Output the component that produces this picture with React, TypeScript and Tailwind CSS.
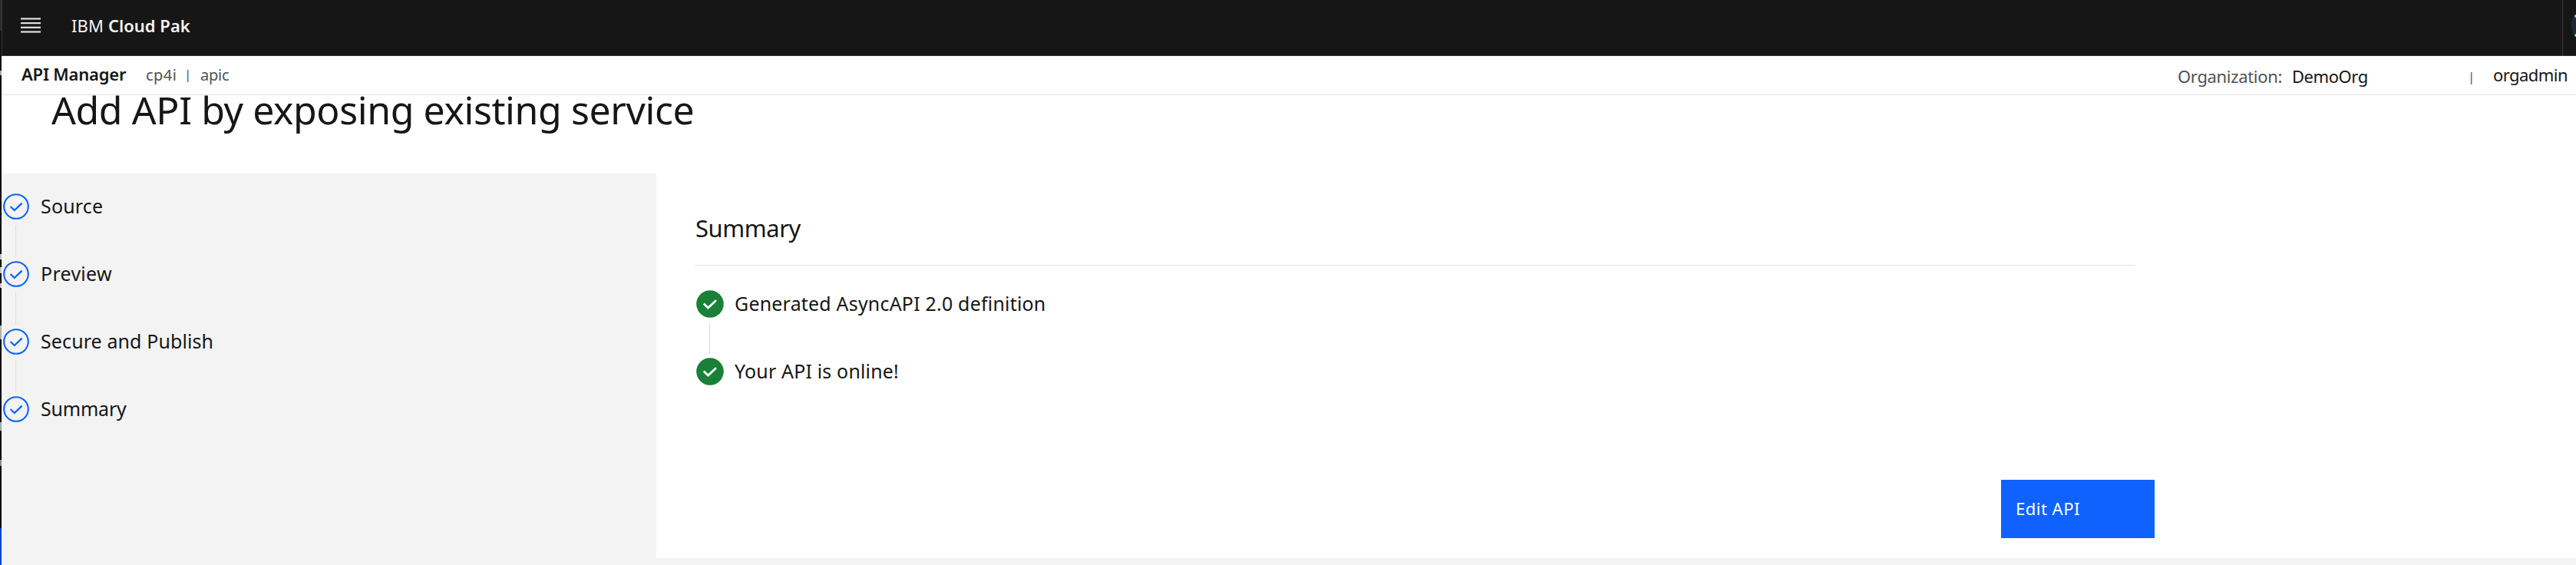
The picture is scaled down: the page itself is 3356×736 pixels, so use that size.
const steps = [
  { label: "Source", spacing: "tracking-[0.175px]" },
  { label: "Preview", spacing: "tracking-[0.28px]" },
  { label: "Secure and Publish", spacing: "tracking-[0.1px]" },
  { label: "Summary", spacing: "tracking-[-0.21px]" },
];

const results = [
  { label: "Generated AsyncAPI 2.0 definition", spacing: "tracking-[0.19px]" },
  { label: "Your API is online!", spacing: "tracking-[0.15px]" },
];

function StepIcon() {
  return (
    <svg width="34" height="34" viewBox="0 0 34 34" fill="none" stroke="#0f62fe" className="mt-px block shrink-0">
      <circle cx="17" cy="17" r="15.8" strokeWidth="2.1" />
      <path d="M9.6 17 L14.8 22 L24.6 12.6" strokeWidth="2.3" />
    </svg>
  );
}

function DoneIcon() {
  return (
    <svg width="36" height="36" viewBox="0 0 36 36" fill="none" className="block shrink-0">
      <circle cx="18" cy="18" r="17.8" fill="#198038" />
      <path d="M9.8 17.6 L15.5 23 L26 13.2" stroke="#fff" strokeWidth="2.8" />
    </svg>
  );
}

function EdgeStrip() {
  return (
    <div className="flex w-[2px] shrink-0 flex-col bg-black">
      <div className="h-[40px] bg-[#2c2c2c]" />
      <div className="h-[52px] bg-[#111111]" />
      <div className="h-[6px] bg-[#a8a8a8]" />
      <div className="mt-[233px] h-[7px] bg-[#c6c6c6]" />
      <div className="mt-[10px] h-[8px] bg-[#c6c6c6]" />
      <div className="mt-[13px] h-[6px] bg-[#c6c6c6]" />
      <div className="mt-[49px] h-[18px] bg-[#b0b0b0]" />
      <div className="mt-[108px] h-[11px] bg-[#a8a8a8]" />
      <div className="mt-[38px] h-[8px] bg-[#8d8d8d]" />
      <div className="mt-auto h-[48px] bg-[#0043ce]" />
    </div>
  );
}

export default function App() {
  return (
    <div className="flex h-[736px] w-full overflow-hidden bg-white font-['Noto_Sans',sans-serif] text-[#161616]">
      <EdgeStrip />
      <div className="flex min-w-0 flex-1 flex-col">
        <header className="flex h-[73px] shrink-0 items-start border-b border-l border-[#393939] bg-[#161616] text-[22px] leading-[30px] whitespace-pre text-[#f4f4f4]">
          <svg width="26" height="20" viewBox="0 0 26 20" fill="#e0e0e0" className="mt-[23px] ml-[24px] block shrink-0">
            <rect y="0.3" width="26" height="2.2" />
            <rect y="6" width="26" height="2.2" />
            <rect y="11.7" width="26" height="2.2" />
            <rect y="17.4" width="26" height="2.2" />
          </svg>
          <span className="mt-[18px] ml-[40px] w-[48px] tracking-[0.1px]">IBM</span>
          <span className="mt-[18px] font-semibold">Cloud Pak</span>
          <div className="ml-auto flex h-[72px] w-[18px] items-start border-l border-[#393939]">
            <svg width="6" height="46" viewBox="0 0 6 46" className="mt-[10px] ml-auto block">
              <circle cx="23" cy="23" r="23" fill="#1c2b33" />
              <circle cx="6" cy="11" r="2" fill="#6fdcbf" />
              <circle cx="6" cy="36" r="2" fill="#6fdcbf" />
            </svg>
          </div>
        </header>

        <div className="flex h-[51px] shrink-0 items-start border-b border-[#e0e0e0] text-[22px] leading-[30px] whitespace-nowrap">
          <span className="mt-[8px] ml-[26px] w-[162px] font-semibold tracking-[-0.2px]">API Manager</span>
          <span className="mt-[11px] w-[50px] text-[20px] leading-[27px] tracking-[0.45px] text-[#525252]">cp4i</span>
          <span className="mt-[12px] w-[21px] text-[17px] leading-[23px] text-[#525252]">|</span>
          <span className="mt-[11px] text-[20px] leading-[27px] tracking-[-0.2px] text-[#525252]">apic</span>
          <div className="ml-auto flex w-[519px] items-start">
            <span className="mt-[11px] w-[149px] tracking-[-0.33px] text-[#525252]">Organization:</span>
            <span className="mt-[11px] w-[229px] tracking-[-0.45px]">DemoOrg</span>
            <span className="mt-[15px] w-[33px] text-[17px] leading-[23px] text-[#525252]">|</span>
            <span className="mt-[9px] tracking-[-0.55px]">orgadmin</span>
          </div>
        </div>

        <div className="h-[102px] shrink-0">
          <h1 className="ml-[65px] text-[50px] leading-[38px] font-normal tracking-[-0.42px] whitespace-nowrap">
            Add API by exposing existing service
          </h1>
        </div>

        <div className="flex min-h-0 flex-1 bg-[#f3f3f3]">
          <nav className="w-[853px] shrink-0 pt-[25px] pl-[2px]">
            {steps.map((step, i) => (
              <div key={step.label} className="flex h-[88px] items-start">
                <div className="flex w-[34px] flex-col items-center">
                  <StepIcon />
                  {i < steps.length - 1 && <div className="mt-[7px] mr-px h-[42px] w-px bg-[#dde1e6]" />}
                </div>
                <span className={`ml-[15px] text-[25px] leading-[34px] whitespace-nowrap ${step.spacing}`}>{step.label}</span>
              </div>
            ))}
          </nav>

          <main className="mb-[9px] flex flex-1 flex-col bg-white pt-[50px] pl-[51px]">
            <div className="w-[1876px] border-b border-[#e0e0e0] pb-[27px]">
              <h2 className="text-[31px] leading-[42px] font-normal tracking-[-0.47px]">Summary</h2>
            </div>
            <div className="pt-[32px] pl-px">
              {results.map((result, i) => (
                <div key={result.label} className="flex h-[88px] items-start">
                  <div className="flex w-[36px] flex-col items-center">
                    <DoneIcon />
                    {i < results.length - 1 && <div className="mt-[6px] mr-[1px] h-[41px] w-px bg-[#dcdcdc]" />}
                  </div>
                  <span className={`ml-[14px] text-[25px] leading-[34px] whitespace-nowrap ${result.spacing}`}>{result.label}</span>
                </div>
              ))}
            </div>
            <button className="mt-[71px] ml-[1701px] flex h-[76px] w-[200px] items-start bg-[#0f62fe] pt-[22px] pl-[19px] text-[22px] leading-[30px] tracking-[0.5px] text-white">
              Edit API
            </button>
          </main>
        </div>
      </div>
    </div>
  );
}
